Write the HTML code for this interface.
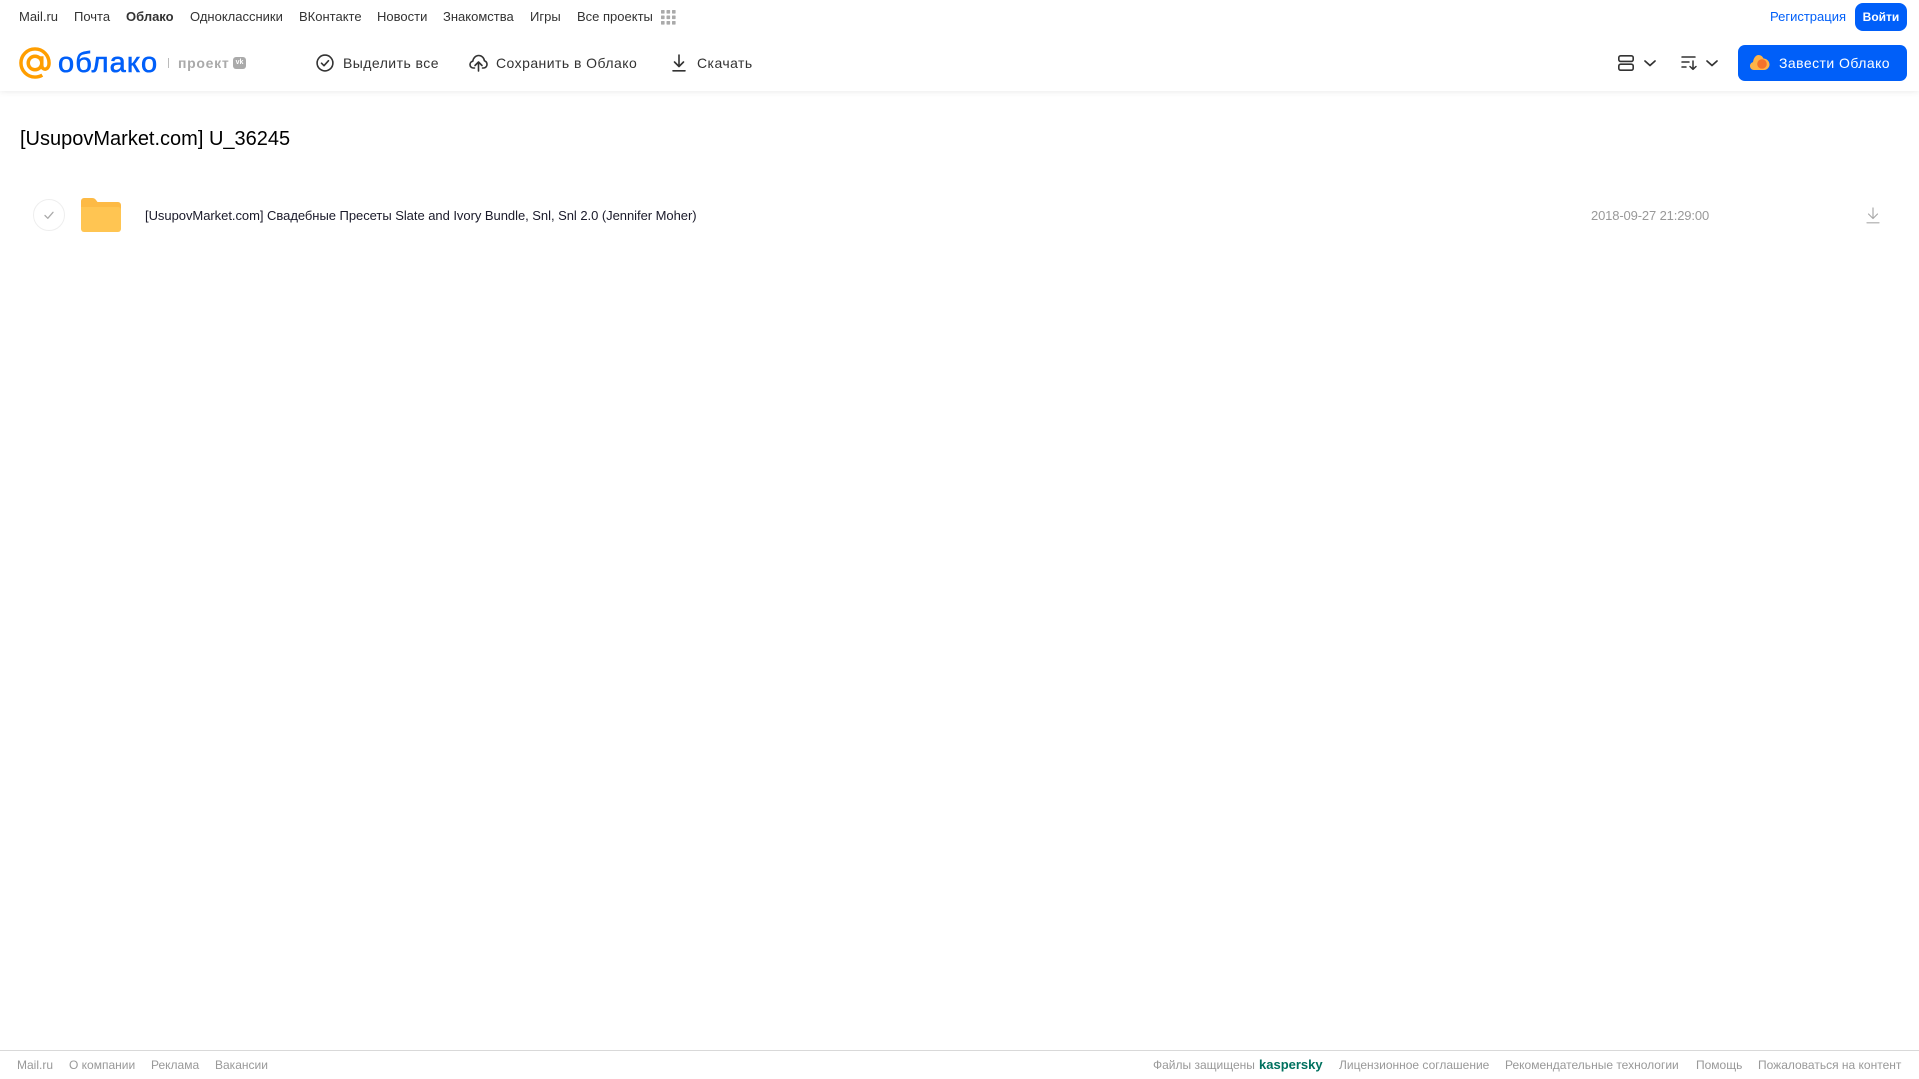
<!DOCTYPE html>
<html lang="ru">
<head>
<meta charset="utf-8">
<title>Облако</title>
<style>
html,body{margin:0;padding:0;background:#fff;width:1919px;height:1079px;overflow:hidden}
body{position:relative;font-family:"Liberation Sans",Arial,sans-serif}
.t{position:absolute;white-space:nowrap;line-height:20px}
.n{font-size:13px;color:#333;top:7px}
.a{font-size:14px;color:#333;top:53px;letter-spacing:.45px}
.f{font-size:12px;color:#999;top:1055px}
svg{position:absolute;overflow:visible}
</style>
</head>
<body>
<div style="position:absolute;left:0;top:0;width:1919px;height:91px;background:#fff;box-shadow:0 1px 6px rgba(0,0,0,.08)"></div>

<span class="t n" style="left:19px">Mail.ru</span>
<span class="t n" style="left:74px">Почта</span>
<span class="t n" style="left:126px;font-weight:bold">Облако</span>
<span class="t n" style="left:190px">Одноклассники</span>
<span class="t n" style="left:299px">ВКонтакте</span>
<span class="t n" style="left:377px">Новости</span>
<span class="t n" style="left:443px">Знакомства</span>
<span class="t n" style="left:530px">Игры</span>
<span class="t n" style="left:577px">Все проекты</span>
<svg style="left:661px;top:10px" width="15" height="15" fill="#aaa"><rect x="0" y="0" width="3.6" height="3.6" rx=".6"/><rect x="5.5" y="0" width="3.6" height="3.6" rx=".6"/><rect x="11" y="0" width="3.6" height="3.6" rx=".6"/><rect x="0" y="5.5" width="3.6" height="3.6" rx=".6"/><rect x="5.5" y="5.5" width="3.6" height="3.6" rx=".6"/><rect x="11" y="5.5" width="3.6" height="3.6" rx=".6"/><rect x="0" y="11" width="3.6" height="3.6" rx=".6"/><rect x="5.5" y="11" width="3.6" height="3.6" rx=".6"/><rect x="11" y="11" width="3.6" height="3.6" rx=".6"/></svg>

<span class="t n" style="left:1770px;color:#005ff9">Регистрация</span>
<div style="position:absolute;left:1855px;top:3px;width:52px;height:28px;background:#005ff9;border-radius:8px;color:#fff;font-size:12px;font-weight:bold;text-align:center;line-height:28px">Войти</div>

<svg style="left:19px;top:47px" width="32" height="32" viewBox="0 0 33 33" fill="none" stroke="#ff9e00" stroke-width="3.6"><circle cx="16.5" cy="16.5" r="7"/><path d="M23.5 9.500v9.500c0 5.500 7.500 5.500 7.500-2.500C31 8.500 24.500 2 16.500 2S2 8.500 2 16.500 8.500 31 16.500 31c3 0 5.500-.8 7.500-2"/></svg>
<span class="t" style="left:58px;top:45px;line-height:36px;font-size:29px;color:#005ff9;letter-spacing:1.1px;-webkit-text-stroke:.6px #005ff9">облако</span>
<div style="position:absolute;left:168px;top:58px;width:1px;height:10px;background:#bbb"></div>
<span class="t" style="left:178px;top:53px;font-size:14px;color:#aaa;font-weight:bold;letter-spacing:.7px">проект</span>
<div style="position:absolute;left:233px;top:57px;width:13px;height:12px;background:#aaa;border-radius:3px;color:#fff;font-size:7px;font-weight:bold;text-align:center;line-height:12px">vk</div>

<svg style="left:316px;top:54px" width="18" height="18" viewBox="0 0 18 18" fill="none" stroke="#333" stroke-width="1.6"><circle cx="9" cy="9" r="7.9"/><path d="M5.500 9.200l2.500 2.500 4.500-5" stroke-linecap="round" stroke-linejoin="round"/></svg>
<span class="t a" style="left:343px">Выделить все</span>

<svg style="left:469px;top:54px" width="19" height="18" viewBox="0 0 19 18" fill="none" stroke="#333" stroke-width="1.600" stroke-linecap="round" stroke-linejoin="round"><path d="M5.500 14H4.500C2.500 14 1 12.500 1 10.600c0-1.700 1.200-3.100 2.800-3.400C4.200 4 6.600 1.500 9.700 1.500c3 0 5.400 2.300 5.700 5.300 1.500.5 2.600 1.900 2.600 3.700 0 2-1.600 3.500-3.500 3.500h-1"/><path d="M9.500 17V8.500M6 11.500l3.500-3.500 3.500 3.500"/></svg>
<span class="t a" style="left:496px">Сохранить в Облако</span>

<svg style="left:671px;top:54px" width="16" height="18" viewBox="0 0 16 18" fill="none" stroke="#333" stroke-width="1.600" stroke-linecap="round" stroke-linejoin="round"><path d="M8 1v11M3.500 8L8 12.500 12.500 8M2 16.800h12"/></svg>
<span class="t a" style="left:697px">Скачать</span>

<svg style="left:1618px;top:55px" width="16" height="16" viewBox="0 0 16 16" fill="none" stroke="#333" stroke-width="1.600"><rect x=".8" y=".8" width="14.400" height="5.600" rx="1.800"/><rect x=".8" y="9.200" width="14.400" height="6" rx="1.800"/></svg>
<svg style="left:1644px;top:60px" width="12" height="7" viewBox="0 0 12 7" fill="none" stroke="#333" stroke-width="1.700" stroke-linecap="round" stroke-linejoin="round"><path d="M1 1l5 4.500L11 1"/></svg>
<svg style="left:1681px;top:56px" width="17" height="14" viewBox="0 0 17 14" fill="none" stroke="#333" stroke-width="1.500" stroke-linecap="round" stroke-linejoin="round"><path d="M1 1h13M1 6h7M1 11h4M12 5v8M9 10.500l3 2.800 3-2.800"/></svg>
<svg style="left:1706px;top:60px" width="12" height="7" viewBox="0 0 12 7" fill="none" stroke="#333" stroke-width="1.700" stroke-linecap="round" stroke-linejoin="round"><path d="M1 1l5 4.500L11 1"/></svg>

<div style="position:absolute;left:1738px;top:45px;width:169px;height:36px;background:#005ff9;border-radius:7px"></div>
<svg style="left:1750px;top:54px" width="20" height="17" viewBox="0 0 20 17"><path d="M4 16C1.500 16 0 14 0 12c0-2 1.300-3.500 3-3.900C3.500 4 6 1 8.500 1c2.500 0 4 1.500 5 3.500 3 0 6 2.500 6 6C19.500 13.500 17 16 14 16z" fill="#ffb347"/><circle cx="12" cy="10" r="4.800" fill="#f4722b"/></svg>
<span class="t a" style="left:1779px;color:#fff">Завести Облако</span>

<span class="t" style="left:20px;top:126px;line-height:26px;font-size:20px;color:#000">[UsupovMarket.com] U_36245</span>

<svg style="left:33px;top:199px" width="32" height="32" viewBox="0 0 32 32" fill="none"><circle cx="16" cy="16" r="15.500" stroke="#eee"/><path d="M12 16.500l2.800 2.800 5.200-6" stroke="#aaa" stroke-width="1.300" stroke-linecap="round" stroke-linejoin="round"/></svg>
<svg style="left:81px;top:198px" width="40" height="34" viewBox="0 0 40 34"><path d="M0 3a3 3 0 0 1 3-3h8c2 0 3 .8 4 2l1.500 2H37a3 3 0 0 1 3 3v5H0z" fill="#fdba45"/><path d="M0 9h37a3 3 0 0 1 3 3v19a3 3 0 0 1-3 3H3a3 3 0 0 1-3-3z" fill="#ffc552"/></svg>
<span class="t" style="left:145px;top:206px;font-size:13px;letter-spacing:-.04px;color:#1a1a2a">[UsupovMarket.com] Свадебные Пресеты Slate and Ivory Bundle, Snl, Snl 2.0 (Jennifer Moher)</span>
<span class="t" style="left:1591px;top:206px;font-size:13px;letter-spacing:-.14px;color:#999">2018-09-27 21:29:00</span>
<svg style="left:1866px;top:207px" width="14" height="17" viewBox="0 0 14 17" fill="none" stroke="#aaa" stroke-width="1.200" stroke-linecap="round" stroke-linejoin="round"><path d="M7 1v10M2.500 7L7 11.500 11.500 7M1 15.800h12"/></svg>

<div style="position:absolute;left:0;top:1050px;width:1919px;height:1px;background:#d9d9d9"></div>
<span class="t f" style="left:17px">Mail.ru</span>
<span class="t f" style="left:69px">О компании</span>
<span class="t f" style="left:151px">Реклама</span>
<span class="t f" style="left:215px">Вакансии</span>
<span class="t f" style="left:1153px">Файлы защищены</span>
<span class="t f" style="left:1259px;font-size:13px;font-weight:bold;color:#00715f">kaspersky</span>
<span class="t f" style="left:1339px">Лицензионное соглашение</span>
<span class="t f" style="left:1505px">Рекомендательные технологии</span>
<span class="t f" style="left:1696px">Помощь</span>
<span class="t f" style="left:1758px">Пожаловаться на контент</span>
</body>
</html>
